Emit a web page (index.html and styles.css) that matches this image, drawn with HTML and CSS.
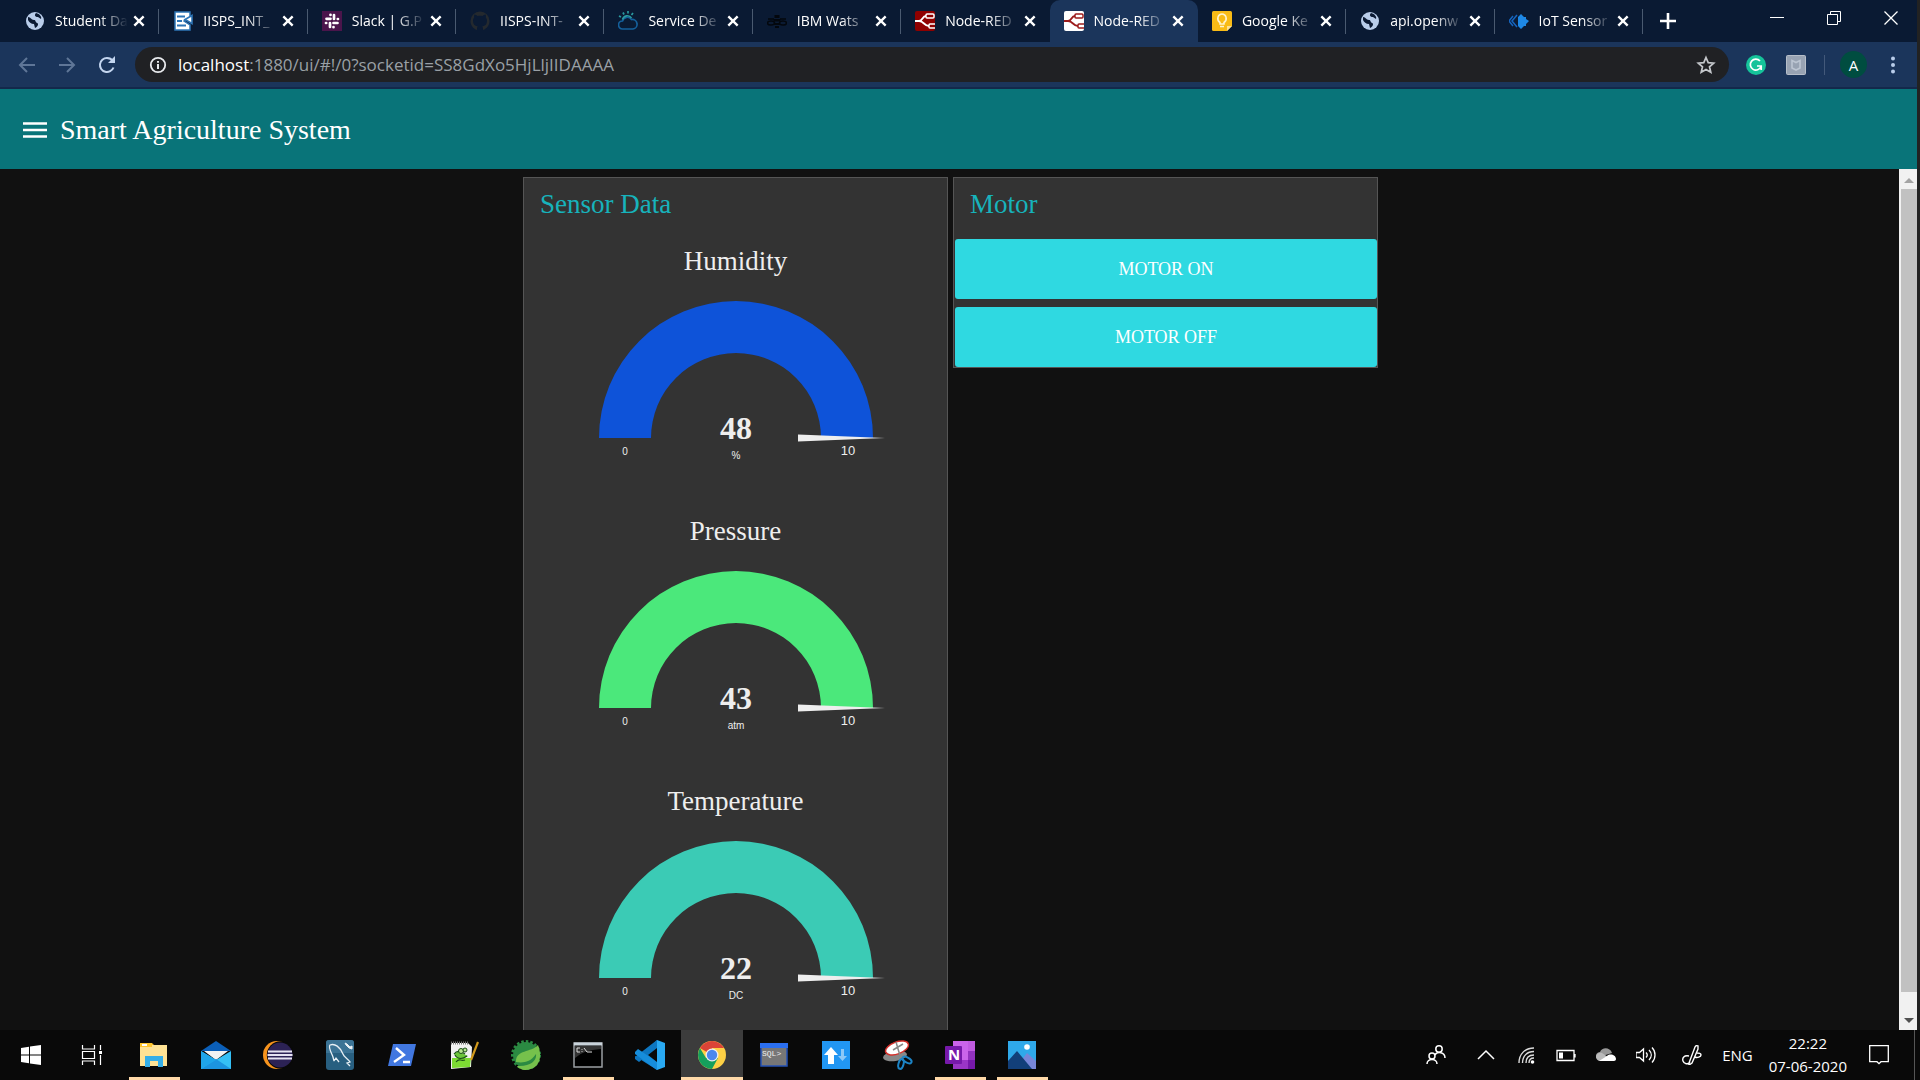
FILE: index.html
```html
<!DOCTYPE html>
<html lang="en">
<head>
<meta charset="utf-8">
<title>Smart Agriculture System</title>
<link rel="stylesheet" href="styles.css">
</head>
<body>
<svg class="sprite" aria-hidden="true">
  <symbol id="x" viewBox="0 0 12 12"><path d="M2 2l8 8M10 2l-8 8" stroke="currentColor" stroke-width="2" fill="none"/></symbol>
  <symbol id="globe" viewBox="0 0 20 20"><circle cx="10" cy="10" r="9" fill="#b9cdea"/><path d="M3 6c3 0 3 3 6 3 2 0 1 2 3 3 2 0 1 4-2 5l-1-4c-3 0-5-2-6-4zM11 2c-2 2-1 4 2 4l3 2c1-2-1-5-5-6z" fill="#0b1a33"/></symbol>
  <symbol id="flow" viewBox="0 0 20 20"><path d="M0 10h4c4 0 3-5 7-5M4 10c5 0 5 5 10 5" fill="none" stroke="currentColor" stroke-width="1.800"/><rect x="11" y="3" width="8" height="4" rx="1" fill="none" stroke="currentColor" stroke-width="1.500"/><rect x="14" y="13" width="7" height="4" rx="1" fill="none" stroke="currentColor" stroke-width="1.500"/></symbol>
</svg>

<div class="window">
  <div class="tabstrip">
    <nav class="tabs" aria-label="Tabs">
      <div class="tab"><svg class="fav"><use href="#globe"/></svg><a href="#" class="tab-title">Student Da</a><button class="tab-close" aria-label="Close"><svg><use href="#x"/></svg></button></div>
      <div class="tab"><svg class="fav" viewBox="0 0 20 20"><path d="M2 1h15v5l-6 4 6 4v5H2z" fill="#fff" stroke="#2e75b6" stroke-width="1.500"/><path d="M4 5.500h8M4 10h5M4 14.500h9" stroke="#2e75b6" stroke-width="2"/><path d="M19 4.500v8l-7-4z" fill="#fff" stroke="#2e75b6" stroke-width="1.600"/></svg><a href="#" class="tab-title">IISPS_INT_</a><button class="tab-close" aria-label="Close"><svg><use href="#x"/></svg></button></div>
      <div class="tab"><svg class="fav" viewBox="0 0 20 20"><rect width="20" height="20" fill="#4a154b"/><path d="M8.500 7.800H4.500M8.500 3.800v.2M12 4v4M15.800 8h.2M11.500 12h4M11.500 16v.2M8 12v4M4 12h.2" stroke="#fff" stroke-width="2.700" stroke-linecap="round"/></svg><a href="#" class="tab-title">Slack | G.P</a><button class="tab-close" aria-label="Close"><svg><use href="#x"/></svg></button></div>
      <div class="tab"><svg class="fav" viewBox="0 0 20 20"><path d="M7 19c0-2 0-3 .8-3.600C4.500 15 3 13 3 10c0-1.500.4-2.500 1.200-3.400-.3-1-.2-2 .2-3C5.500 3.600 7 4.500 7.500 5c1.500-.4 3.500-.4 5 0 .5-.5 2-1.400 3.100-1.400.4 1 .5 2 .2 3C16.600 7.500 17 8.500 17 10c0 3-1.500 5-4.800 5.400.8.600.8 1.600.8 3.600 4-1.300 6.500-5 6.500-9a9.500 9.500 0 10-19 0c0 4 2.500 7.700 6.500 9z" fill="#24292e"/></svg><a href="#" class="tab-title">IISPS-INT-</a><button class="tab-close" aria-label="Close"><svg><use href="#x"/></svg></button></div>
      <div class="tab"><svg class="fav" viewBox="0 0 20 20"><g fill="none" stroke-width="1.700"><path d="M4.500 18a4 4 0 010-8 5 5 0 019-1.500A4.800 4.800 0 0115 18z" stroke="#14609c"/><path d="M4.500 8.500a5 5 0 019-1.500M1 5l2 1M5 1.500l1 2M10 0v2.500M15 2l-1.500 2" stroke="#2a9aa0"/></g></svg><a href="#" class="tab-title">Service De</a><button class="tab-close" aria-label="Close"><svg><use href="#x"/></svg></button></div>
      <div class="tab"><svg class="fav" viewBox="0 0 20 20"><g fill="none" stroke="#03070d" stroke-width="1.500"><ellipse cx="4" cy="12" rx="3.500" ry="2"/><ellipse cx="16" cy="12" rx="3.500" ry="2"/><path d="M1 8h6M13 8h6"/></g><path d="M7.500 4h5v3h-5zM6.500 8h7v2.500h-7zM7 12h6v2H7zM8 15h4v2H8z" fill="#03070d"/></svg><a href="#" class="tab-title">IBM Wats</a><button class="tab-close" aria-label="Close"><svg><use href="#x"/></svg></button></div>
      <div class="tab"><svg class="fav red"><use href="#flow"/></svg><a href="#" class="tab-title">Node-RED</a><button class="tab-close" aria-label="Close"><svg><use href="#x"/></svg></button></div>
      <div class="tab active"><svg class="fav white"><use href="#flow"/></svg><a href="#" class="tab-title">Node-RED</a><button class="tab-close" aria-label="Close"><svg><use href="#x"/></svg></button></div>
      <div class="tab"><svg class="fav" viewBox="0 0 20 20"><path d="M0 1.500Q0 0 1.500 0h17Q20 0 20 1.500V15l-5 5H1.500Q0 20 0 18.500z" fill="#f9bb16"/><path d="M20 15h-5v5z" fill="#fde293"/><path d="M8 13v-1.500c-4-3-2-8.500 2-8.500s6 5.500 2 8.500V13zM8 15.500h4" fill="none" stroke="#fff3cf" stroke-width="1.600"/></svg><a href="#" class="tab-title">Google Ke</a><button class="tab-close" aria-label="Close"><svg><use href="#x"/></svg></button></div>
      <div class="tab"><svg class="fav"><use href="#globe"/></svg><a href="#" class="tab-title">api.openw</a><button class="tab-close" aria-label="Close"><svg><use href="#x"/></svg></button></div>
      <div class="tab"><svg class="fav" viewBox="0 0 20 20"><path d="M9 6l3-3 3 3h2v2l3 2-3 3v2h-2l-3 3-3-3V6z" fill="#1e88e5"/><path d="M4 5l-4 5 4 5M8 4l-5 6 5 6" fill="none" stroke="#1565c0" stroke-width="1.500"/></svg><a href="#" class="tab-title">IoT Sensor</a><button class="tab-close" aria-label="Close"><svg><use href="#x"/></svg></button></div>
    </nav>
    <button class="new-tab" aria-label="New tab"><svg viewBox="0 0 16 16"><path d="M8 0v16M0 8h16" stroke="#fff" stroke-width="2.600"/></svg></button>
    <div class="controls">
      <button aria-label="Minimize"><svg viewBox="0 0 14 14"><path d="M0 6.500h14" stroke="#fff"/></svg></button>
      <button aria-label="Restore"><svg viewBox="0 0 14 14"><path d="M.5 3.500h10v10H.5zM3.500 3V.5h10v10H11" fill="none" stroke="#fff"/></svg></button>
      <button aria-label="Close"><svg viewBox="0 0 14 14"><path d="M.5.5l13 13M13.500.5l-13 13" stroke="#fff" stroke-width="1.300"/></svg></button>
    </div>
  </div>

  <div class="toolbar">
    <div class="nav">
      <button class="dim" aria-label="Back"><svg viewBox="0 0 18 18"><path d="M17 9H2M9 2L2 9l7 7" /></svg></button>
      <button class="dim" aria-label="Forward"><svg viewBox="0 0 18 18"><path d="M1 9h15M9 2l7 7-7 7"/></svg></button>
      <button aria-label="Reload"><svg viewBox="0 0 18 18"><path d="M15.500 11.500A7 7 0 119 2c2.500 0 4.500 1 6 3"/><path d="M17 0v7h-7z" fill="#c3d5ef" stroke="none"/></svg></button>
    </div>
    <div class="omnibox">
      <svg class="info" viewBox="0 0 18 18"><circle cx="9" cy="9" r="7.200" fill="none" stroke="#e8eaed" stroke-width="1.800"/><path d="M9 8v5M9 5v1.800" stroke="#e8eaed" stroke-width="2"/></svg>
      <span class="url"><b>localhost</b>:1880/ui/#!/0?socketid=SS8GdXo5HjLljIIDAAAA</span>
      <svg class="star" viewBox="0 0 20 20"><path d="M10 2.500l2.200 5.100 5.500.5-4.200 3.700 1.300 5.500L10 14.400l-4.800 2.900 1.300-5.500-4.200-3.700 5.500-.5z" fill="none" stroke="#c4c7cb" stroke-width="1.700"/></svg>
    </div>
    <div class="extensions">
      <svg viewBox="0 0 20 20"><circle cx="10" cy="10" r="10" fill="#15c39a"/><path d="M14 6a5.500 5.500 0 101 5.500M11 11h4.200v4" fill="none" stroke="#fff" stroke-width="1.700"/></svg>
      <svg viewBox="0 0 20 20"><rect x=".5" y=".5" width="19" height="19" rx="1" fill="#98a3b3" stroke="#b6bec9"/><path d="M6 5.500l4 2 4-2v7.500l-4 2-4-2z" fill="none" stroke="#bcc5d2" stroke-width="1.600"/></svg>
    </div>
    <button class="avatar">A</button>
    <button class="dots" aria-label="Menu"><svg viewBox="0 0 4 18"><g fill="#b9cdea"><circle cx="2" cy="2.500" r="2"/><circle cx="2" cy="9" r="2"/><circle cx="2" cy="15.500" r="2"/></g></svg></button>
  </div>

  <header class="app-bar">
    <button class="burger" aria-label="Open menu"><svg viewBox="0 0 24 16"><path d="M0 1.500h24M0 8h24M0 14.500h24" stroke="#fff" stroke-width="2.400"/></svg></button>
    <h1>Smart Agriculture System</h1>
  </header>

  <div class="viewport">
    <main class="dashboard">
      <section class="group">
        <h2>Sensor Data</h2>
        <figure class="gauge humidity">
          <figcaption>Humidity</figcaption>
          <svg viewBox="0 0 300 166"><path class="arc" d="M13 138a137 137 0 01274 0h-52a85 85 0 00-170 0z"/><path class="needle" d="M212 134.500l87 3.500-87 3.500z"/><text class="value" x="150" y="139">48</text><text class="small" x="39" y="155">0</text><text class="small" x="150" y="159">%</text><text class="max" x="262" y="155">10</text></svg>
        </figure>
        <figure class="gauge pressure">
          <figcaption>Pressure</figcaption>
          <svg viewBox="0 0 300 166"><path class="arc" d="M13 138a137 137 0 01274 0h-52a85 85 0 00-170 0z"/><path class="needle" d="M212 134.500l87 3.500-87 3.500z"/><text class="value" x="150" y="139">43</text><text class="small" x="39" y="155">0</text><text class="small" x="150" y="159">atm</text><text class="max" x="262" y="155">10</text></svg>
        </figure>
        <figure class="gauge temperature">
          <figcaption>Temperature</figcaption>
          <svg viewBox="0 0 300 166"><path class="arc" d="M13 138a137 137 0 01274 0h-52a85 85 0 00-170 0z"/><path class="needle" d="M212 134.500l87 3.500-87 3.500z"/><text class="value" x="150" y="139">22</text><text class="small" x="39" y="155">0</text><text class="small" x="150" y="159">DC</text><text class="max" x="262" y="155">10</text></svg>
        </figure>
      </section>
      <section class="group motor">
        <h2>Motor</h2>
        <div class="actions">
          <button>MOTOR ON</button>
          <button>MOTOR OFF</button>
        </div>
      </section>
    </main>
    <div class="scrollbar" aria-hidden="true">
      <svg viewBox="0 0 18 20"><path d="M5 14h10l-5-5z" fill="#a3a3a3"/></svg>
      <div class="thumb"></div>
      <svg viewBox="0 0 18 20"><path d="M5 8h10l-5 5z" fill="#505050"/></svg>
    </div>
  </div>
</div>

<footer class="taskbar">
  <button class="task" aria-label="Start"><svg viewBox="0 0 30 30"><path d="M5 8l8-1.200V14.500H5zM14 6.600L25 5v9.500H14zM5 15.500h8v7.700L5 22zM14 15.500h11V25l-11-1.600z" fill="#fff"/></svg></button>
  <button class="task" aria-label="Task view"><svg viewBox="0 0 30 30"><path d="M5.500 5v4h12V5M5.500 25v-4h12v4M5.500 11.500h12v7h-12zM23.500 5v5M23.500 15v10" fill="none" stroke="#fff" stroke-width="1.200"/><path d="M22 11h3v3h-3z" fill="#fff"/></svg></button>
  <button class="task open" aria-label="File Explorer"><svg viewBox="0 0 30 30"><path d="M1 3h12l2 2H1z" fill="#f5b921"/><path d="M1 5h27v21H1z" fill="#ffe294"/><path d="M1 3h12v4H1z" fill="#ffc52d"/><path d="M3 4h5v2H3z" fill="#fff"/><path d="M6 27V16h18v11h-5v-6h-8v6z" fill="#35aee8"/></svg></button>
  <button class="task" aria-label="Mail"><svg viewBox="0 0 30 30"><path d="M0 11L15 1l15 10z" fill="#0b5fb8"/><path d="M3 11h24L15 20z" fill="#f3f3f3"/><path d="M0 11l15 9 15-9v18H0z" fill="#35c0f5"/><path d="M0 29l15-10 15 10z" fill="#1c94e0"/><path d="M0 11l15 9L0 29z" fill="#1fa5ea"/></svg></button>
  <button class="task" aria-label="Eclipse"><svg viewBox="0 0 30 30"><circle cx="14" cy="15" r="14" fill="#f7941e"/><circle cx="17.500" cy="15" r="13.700" fill="#090909"/><circle cx="17" cy="15" r="12.500" fill="#2c2255"/><path d="M5 11.500h24M4.500 15h25M5 18.500h24" stroke="#e6e3f1" stroke-width="2.200"/></svg></button>
  <button class="task" aria-label="MySQL Workbench"><svg viewBox="0 0 30 30"><rect x="1" width="28" height="30" rx="3" fill="#285f80"/><path d="M1 3q0-3 3-3h22q3 0 3 3v10H1z" fill="#3b7395"/><path d="M9 21l-1-4C6 12 3 7 5 5c5-2 10 2 13 9 1 3 4 4 7 8l-3 1 3 3M9 21l2-3 3 4" fill="none" stroke="#e7eff4" stroke-width="1.300"/><path d="M20 3l2 1 3 3 2-1v3l-3-1-3-3z" fill="#e7eff4" stroke="#e7eff4"/></svg></button>
  <button class="task" aria-label="PowerShell"><svg viewBox="0 0 30 30"><path d="M6 4h23l-5 22H1z" fill="#4177e0"/><path d="M9 8l8 7-10 7M16 22h7" fill="none" stroke="#fff" stroke-width="2.400"/></svg></button>
  <button class="task" aria-label="Notepad++"><svg viewBox="0 0 30 30"><path d="M2 3h17l4 4-1 20-20 2z" fill="#f1f1f1"/><path d="M3 18h19l-1 9-18 1z" fill="#7ddb33"/><path d="M2 3h17" stroke="#777" stroke-width="3" stroke-dasharray="1 1"/><path d="M5 14c3-3 7-2 10 0l4 2-4 2c-4 2-8 0-10-4z" fill="#6cc53a"/><path d="M5 14c3-4 7-3 11 0M6 15c3 5 8 4 12 1M7 22c4-5 4 0 9-2" fill="none" stroke="#1a4f17" stroke-width="1.200"/><circle cx="12" cy="11" r="2.500" fill="#b9e58f" stroke="#1a4f17"/><circle cx="16" cy="10" r="2" fill="#b9e58f" stroke="#1a4f17"/><path d="M29 2l-7 18" stroke="#d39a1c" stroke-width="2.200"/></svg></button>
  <button class="task" aria-label="Spring Tools"><svg viewBox="0 0 30 30"><circle cx="15" cy="15" r="13" fill="#2b8a42"/><circle cx="15" cy="15" r="13.500" fill="none" stroke="#2b8a42" stroke-width="3" stroke-dasharray="2.500 2"/><path d="M27 5c5 13 1 24-12 25-4 0-8-2-9-4 14 1 20-6 19-12-6 9-14 9-20 8C5 9 20 13 27 5z" fill="#76c14c"/></svg></button>
  <button class="task open" aria-label="Command Prompt"><svg viewBox="0 0 30 30"><path d="M1 3h28v24H1z" fill="#000" stroke="#9a9fa3" stroke-width="1.500"/><path d="M1 4h28" stroke="#c9d3da" stroke-width="3"/><path d="M2 6h26v3Q10 10 2 18z" fill="#333"/><path d="M7 8H4v4h3M9 9v.8M9 11v.8M11 8l3 4M14 12h5" fill="none" stroke="#ddd"/></svg></button>
  <button class="task" aria-label="Visual Studio Code"><svg viewBox="0 0 30 30"><path d="M22 0L7 17l-4 3-3-2v-2L22 30z" fill="#1182cf"/><path d="M22 8L4 22l-4-3v-2L22 0z" fill="#0d76c0"/><path d="M0 12l3-3 19 13v8L0 14z" fill="#168ddb"/><path d="M22 8v14l-9-7z" fill="#090909"/><path d="M22 0l8 3v24l-8 3z" fill="#29a9f2"/></svg></button>
  <button class="task open current" aria-label="Chrome"><svg viewBox="0 0 30 30"><circle cx="15" cy="15" r="14" fill="#fdd045"/><path d="M15 15L2.900 8A14 14 0 0127.100 8H15z" fill="#db4437"/><path d="M2.900 8A14 14 0 0015 29l6-11-12 0z" fill="#159f5c"/><circle cx="15" cy="15" r="6.500" fill="#eee"/><circle cx="15" cy="15" r="5.200" fill="#4b87ee"/></svg></button>
  <button class="task" aria-label="SQL Command Line"><svg viewBox="0 0 30 30"><path d="M2 4h26v22H2z" fill="#777" stroke="#2552b5" stroke-width="1.500"/><path d="M1 3h28v5H1z" fill="#2b6ff0"/><text class="mini" x="3" y="16">SQL&gt;</text></svg></button>
  <button class="task" aria-label="Data transfer"><svg viewBox="0 0 30 30"><path d="M1 1h28v28H1z" fill="#2196f3"/><path d="M10 7l7 8h-4v9H7v-9H3z" fill="#fff"/><path d="M20 9h3v7h3l-4.500 5-4.500-5h3z" fill="#8ec8f7"/></svg></button>
  <button class="task" aria-label="Snipping Tool"><svg viewBox="0 0 30 30"><ellipse cx="12" cy="16" rx="12" ry="5" fill="#888" transform="rotate(-8 12 16)"/><ellipse cx="14" cy="8" rx="12" ry="6" fill="#fff" stroke="#d3302b" stroke-width="1.500" transform="rotate(-20 14 8)"/><path d="M13 2l5 17M10 10l10-6" stroke="#888" stroke-width="1.500"/><g fill="none" stroke="#1c84c6" stroke-width="2"><ellipse cx="18" cy="24" rx="2.500" ry="5" transform="rotate(15 18 24)"/><ellipse cx="24" cy="20" rx="2.500" ry="5" transform="rotate(-60 24 20)"/></g></svg></button>
  <button class="task open" aria-label="OneNote"><svg viewBox="0 0 30 30"><path d="M8 1h22v28H8z" fill="#ca64ea"/><path d="M23 1h7v10h-7z" fill="#c05be0"/><path d="M23 11h7v9h-7z" fill="#9332bf"/><path d="M8 20h22v9H8z" fill="#9a35c6"/><path d="M23 20h7v9h-7z" fill="#7719aa"/><rect y="6" width="17" height="18" rx="1" fill="#7719aa"/><text class="note" x="3" y="20">N</text></svg></button>
  <button class="task open" aria-label="Photos"><svg viewBox="0 0 30 30"><path d="M1 1h28v28H1z" fill="#2fa9ea"/><path d="M8 29l12-16 9 8v8z" fill="#7886d8"/><path d="M1 21l9-10 15 18H1z" fill="#123f79"/><circle cx="20" cy="7" r="2.800" fill="#fff"/></svg></button>

  <div class="tray">
    <svg class="people" viewBox="0 0 20 20"><g fill="none" stroke="#fff" stroke-width="1.500"><circle cx="13" cy="4" r="3.200"/><circle cx="6" cy="11" r="3"/><path d="M1 19c0-6 10-6 10 0M9 10c2-4 10-3 10 3"/></g></svg>
    <svg viewBox="0 0 20 20"><path d="M2 14l8-8 8 8" fill="none" stroke="#fff" stroke-width="1.500"/></svg>
    <svg viewBox="0 0 20 20"><g fill="none" stroke="#ddd" stroke-width="1.400"><path d="M3 18C3 9 9 3 18 3M6.500 18C6.500 11 11 6.500 18 6.500M10 18c0-5 3-8 8-8M13 18c0-3 2-5 5-5"/></g><circle cx="16.500" cy="17" r="1.800" fill="#fff"/></svg>
    <svg viewBox="0 0 20 20"><path d="M1 5.500h17v10H1zM19 9v3.500" fill="none" stroke="#fff" stroke-width="1.300"/><path d="M3 7.500h4v6H3z" fill="#fff"/></svg>
    <svg viewBox="0 0 20 20"><path d="M0 13c-1-4 2-6 4-6 2-5 10-5 12 1z" fill="#999"/><path d="M0 12c0-3 3-5 6-4l12 8H4c-2 0-4-2-4-4z" fill="#bbb"/><path d="M3 16l8-5c3-3 9-1 9 3 0 1-1 2-2 2z" fill="#fff"/></svg>
    <svg viewBox="0 0 20 20"><path d="M0 7.500h3.500L7.500 4v12l-4-3.500H0zM10 7.500c1.500 1.500 1.500 3.500 0 5M13 5c3 3 3 7 0 10M16 2.500c4 4 4 11 0 15" fill="none" stroke="#fff" stroke-width="1.300"/></svg>
    <svg class="pen" viewBox="0 0 20 20"><path d="M7 18L13 2q1-2 3-1v3L10 18l-3 2zM7 11c-5-1-7 2-6 5s5 4 7 1M13 12c2 1 6 0 6-2s-2-2-4-2" fill="none" stroke="#fff" stroke-width="1.400"/></svg>
    <span>ENG</span>
    <time class="clock" datetime="2020-06-07T22:22"><span>22:22</span><span>07-06-2020</span></time>
    <svg class="notice" viewBox="0 0 20 20"><path d="M.7.700h18.600v16H12l-2 2-2-2H.7z" fill="none" stroke="#fff" stroke-width="1.300"/></svg>
  </div>
</footer>
</body>
</html>
```
FILE: styles.css
```css
* { box-sizing: border-box; }

body {
  margin: 0;
  height: 100vh;
  display: flex;
  flex-direction: column;
  overflow: hidden;
  background: #222;
  color: #fff;
  font: 16px/24px "Open Sans", "Noto Sans", sans-serif;
}

button {
  border: 0;
  padding: 0;
  background: none;
  color: inherit;
  font: inherit;
}

svg { display: block; }
.sprite { position: absolute; width: 0; height: 0; }

.window {
  flex: 1;
  min-height: 0;
  margin-right: 3px;
  display: flex;
  flex-direction: column;
  background: #111;
}

/* Tabs */
.tabstrip {
  height: 42px;
  display: flex;
  align-items: center;
  padding-left: 11px;
  background: #0a1a33;
}
.tabs {
  flex: 0 1 1632px;
  align-self: stretch;
  display: flex;
  min-width: 0;
}
.tab {
  flex: 1 1 0;
  min-width: 0;
  display: flex;
  align-items: center;
  padding: 0 13px 0 14px;
  background: linear-gradient(#4a5a70, #4a5a70) right 9px / 1px 25px no-repeat;
}
.tab.active {
  border-radius: 10px 10px 0 0;
  background: #1b355b;
}
.tab:has(+ .active) { background: none; }
.fav { flex: none; width: 20px; height: 20px; color: #fff; }
.red { background: #8f0000; border-radius: 2px; }
.white { background: #fff; color: #9c1c1c; border-radius: 2px; }
.tab-title {
  flex: 1;
  min-width: 0;
  margin: 0 4px 0 10px;
  overflow: hidden;
  white-space: nowrap;
  color: #fff;
  font-size: 14px;
  text-decoration: none;
  mask-image: linear-gradient(90deg, #000 60%, transparent);
}
.tab-close svg { width: 14px; height: 14px; }
.new-tab { margin-left: 17px; }
.new-tab svg { width: 16px; height: 16px; }
.controls { margin: 0 19px 6px auto; display: flex; gap: 43px; }
.controls svg { width: 14px; height: 14px; }

/* Toolbar */
.toolbar {
  height: 47px;
  display: flex;
  align-items: center;
  padding: 0 22px 0 18px;
  background: #1b355b;
  border-bottom: 2px solid #13294b;
}
.nav { display: flex; gap: 22px; margin-right: 19px; }
.nav svg {
  width: 18px;
  height: 18px;
  fill: none;
  stroke: #c3d5ef;
  stroke-width: 2;
}
.nav .dim svg { stroke: #5f7697; }
.omnibox {
  flex: 1;
  min-width: 0;
  height: 35px;
  margin-right: 17px;
  padding: 0 13px 0 14px;
  display: flex;
  align-items: center;
  border-radius: 18px;
  background: #202124;
}
.info { width: 18px; height: 18px; }
.url { flex: 1; margin-left: 11px; color: #9aa0a6; font-size: 17px; }
.url b { color: #fff; font-weight: 400; }
.star { width: 20px; height: 20px; }
.extensions {
  display: flex;
  gap: 20px;
  padding-right: 18px;
  border-right: 1px solid #43597a;
}
.extensions svg { width: 20px; height: 20px; }
.avatar {
  width: 27px;
  height: 27px;
  margin: 0 24px 0 15px;
  border-radius: 50%;
  background: #004d40;
  font-size: 15px;
}
.dots svg { width: 4px; height: 18px; }

/* Dashboard header */
.app-bar {
  height: 80px;
  display: flex;
  align-items: center;
  gap: 13px;
  padding: 2px 0 0 23px;
  background: #097479;
}
.burger svg { width: 24px; height: 16px; }
h1, h2, figcaption, .actions button, .value {
  font-family: Georgia, "Liberation Serif", serif;
}
h1, h2 { margin: 0; font-weight: 400; }
h1, h2, figcaption { font-size: 27px; line-height: 32px; }
h1 { font-size: 28px; }

/* Dashboard */
.viewport {
  flex: 1;
  min-height: 0;
  display: flex;
  overflow: hidden;
}
.dashboard {
  flex: 1;
  display: flex;
  justify-content: center;
  align-items: flex-start;
  gap: 5px;
  padding: 8px 0 0 2px;
}
.group {
  width: 425px;
  border: 1px solid #555;
  background: #333;
}
h2 { padding: 10px 16px 19px; color: #17b3bc; }
.gauge {
  height: 270px;
  margin: 0;
  padding-top: 6px;
  display: flex;
  flex-direction: column;
  align-items: center;
  gap: 23px;
  color: #eee;
}
.gauge svg { width: 300px; height: 166px; }
.humidity .arc { fill: #0e53d9; }
.pressure .arc { fill: #4be87b; }
.temperature .arc { fill: #3bcbb5; }
.needle { fill: #eee; }
.gauge text {
  fill: #eee;
  text-anchor: middle;
  font-family: "Liberation Sans", Arial, sans-serif;
}
.gauge .value {
  font-family: Georgia, "Liberation Serif", serif;
  font-size: 32px;
  font-weight: 700;
}
.gauge .small { font-size: 10px; }
.gauge .max { font-size: 13px; }

.actions { display: grid; gap: 8px; padding-left: 1px; }
.actions button {
  height: 60px;
  border-radius: 3px;
  background: #2fd9e1;
  font-size: 18px;
}

.scrollbar {
  width: 18px;
  display: flex;
  flex-direction: column;
  background: #f1f1f1;
}
.scrollbar svg { width: 18px; height: 20px; }
.thumb { flex: 1; margin: 0 0 18px 2px; background: #c1c1c1; }

/* Taskbar */
.taskbar {
  height: 50px;
  display: flex;
  background: #090909;
}
.task {
  width: 62px;
  display: grid;
  place-items: center;
}
.task:first-child { width: 61px; }
.task svg { width: 30px; height: 30px; }
.open { background: linear-gradient(#ffd9a8, #ffd9a8) bottom / 51px 3px no-repeat; }
.current { background: linear-gradient(#ffd9a8, #ffd9a8) bottom / 100% 3px no-repeat #3c3c3c; }
.mini { fill: #eee; font: 8px "Liberation Mono", monospace; }
.note { fill: #fff; font: 700 15px "Open Sans", sans-serif; }
.tray {
  margin-left: auto;
  margin-right: 5px;
  padding-right: 23px;
  display: flex;
  align-items: center;
  gap: 16px;
  border-right: 1px solid #555;
  font-size: 15px;
}
.tray svg { width: 20px; height: 20px; margin: 0 2px; }
.tray .people { margin-right: 12px; }
.tray .pen { margin: 0 4px 0 8px; }
.clock { display: grid; text-align: center; line-height: 23px; }
.tray .notice { margin-left: 6px; }
```
